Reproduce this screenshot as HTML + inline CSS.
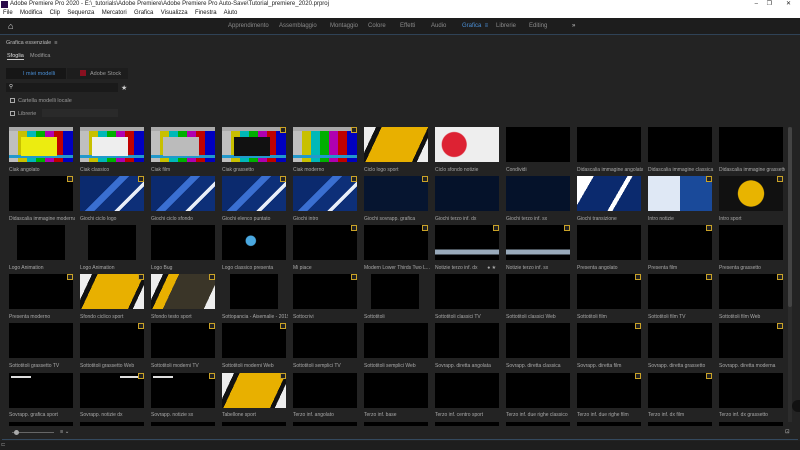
<!DOCTYPE html>
<html><head><meta charset="utf-8"><style>
*{margin:0;padding:0;box-sizing:border-box}
body{width:800px;height:450px;overflow:hidden;background:#232323;font-family:"Liberation Sans",sans-serif;position:relative}
.abs{position:absolute}
#title{left:0;top:0;width:800px;height:9px;background:#fff;font-size:6px;color:#222;line-height:9px;padding-left:10px}
#menu{left:0;top:9px;width:800px;height:9px;background:#fff;font-size:6px;color:#111;line-height:9px;padding-left:3px;word-spacing:2px}
#hdr{left:0;top:18px;width:800px;height:17px;background:#1d1d1d;border-bottom:1px solid #2f4256}
#hdr span{position:absolute;top:5px;font-size:6px;color:#8a8a8a}
#panel{left:2px;top:36px;width:796px;height:404px;background:#232323;border-bottom:1px solid #34495e}
.t{font-size:5.5px;color:#9a9a9a;position:absolute;white-space:nowrap}
.th{position:absolute;width:64px;height:35px;background:#000}
.lb{position:absolute;font-size:5px;color:#a9a9a9;white-space:nowrap;width:66px;overflow:hidden}
.bars{background:linear-gradient(180deg,#aaa 0 12%,transparent 12% 80%,#29c 80% 88%,transparent 88%),linear-gradient(90deg,#bfbfbf 0 14%,#c8c000 14% 28%,#00b8b8 28% 42%,#00b000 42% 56%,#b000b0 56% 70%,#c00000 70% 84%,#0000c0 84% 100%)}
.in{position:absolute;left:12px;top:10px;width:36px;height:19px}
.blue{background:linear-gradient(135deg,#0b2a6e 0 40%,#3a6fd1 40% 50%,#0d2f78 50% 70%,#e8eef8 70% 75%,#0d2f78 75%)}
.yel{background:linear-gradient(115deg,#eee 0 15%,#111 15% 22%,#e8b000 22% 80%,#111 80% 86%,#eee 86%)}
.ic{position:absolute;width:6px;height:6px;border:1px solid #c9a227;right:0;top:0;background:#222}
.wb{position:absolute;left:2px;top:3px;width:20px;height:2px;background:#ddd}
</style></head><body>
<div id="title" class="abs"><span style="position:absolute;left:1px;top:1px;width:7px;height:7px;background:#2a0a4a"></span>Adobe Premiere Pro 2020 - E:\_tutorials\Adobe Premiere\Adobe Premiere Pro Auto-Save\Tutorial_premiere_2020.prproj<span style="position:absolute;right:42px">–</span><span style="position:absolute;right:28px">❐</span><span style="position:absolute;right:9px">✕</span></div>
<div id="menu" class="abs">File&nbsp; Modifica&nbsp; Clip&nbsp; Sequenza&nbsp; Mercatori&nbsp; Grafica&nbsp; Visualizza&nbsp; Finestra&nbsp; Aiuto</div>
<div id="hdr" class="abs">
<span style="left:8px;top:3px;color:#ddd;font-size:9px">⌂</span>
<span style="left:228px">Apprendimento</span><span style="left:279px">Assemblaggio</span><span style="left:330px">Montaggio</span><span style="left:368px">Colore</span><span style="left:400px">Effetti</span><span style="left:431px">Audio</span><span style="left:462px;color:#4a8fd6">Grafica&nbsp;&nbsp;≡</span><span style="left:496px">Librerie</span><span style="left:529px">Editing</span><span style="left:572px;color:#ccc">»</span>
</div>
<div id="panel" class="abs"></div>
<div class="t" style="left:6px;top:40px;color:#bbb">Grafica essenziale &nbsp;≡</div>
<div class="t" style="left:7px;top:53px;color:#ddd;border-bottom:1px solid #ccc">Sfoglia</div>
<div class="t" style="left:30px;top:53px">Modifica</div>
<div class="abs" style="left:6px;top:68px;width:60px;height:11px;background:#161616"></div>
<div class="t" style="left:23px;top:71px;color:#4a8fd6">I miei modelli</div>
<div class="abs" style="left:67px;top:68px;width:61px;height:11px;background:#1d1d1d"></div>
<div class="abs" style="left:80px;top:70px;width:6px;height:6px;background:#8a1020"></div>
<div class="t" style="left:90px;top:71px">Adobe Stock</div>
<div class="abs" style="left:6px;top:83px;width:112px;height:9px;background:#1a1a1a"></div>
<div class="t" style="left:9px;top:84px;color:#ddd">⚲</div>
<div class="t" style="left:121px;top:84px;color:#ccc;font-size:7px">★</div>
<div class="abs" style="left:10px;top:98px;width:5px;height:5px;border:1px solid #aaa"></div>
<div class="t" style="left:18px;top:98px">Cartella modelli locale</div>
<div class="abs" style="left:10px;top:111px;width:5px;height:5px;border:1px solid #aaa"></div>
<div class="t" style="left:18px;top:111px">Librerie</div>
<div class="abs" style="left:42px;top:109px;width:76px;height:8px;background:#2a2a2a"></div>
<div class="abs" style="left:788px;top:127px;width:4px;height:295px;background:#2c2c2c"></div>
<div class="abs" style="left:788px;top:127px;width:4px;height:180px;background:#444;border-radius:2px"></div>
<div class="abs" style="left:792px;top:400px;width:8px;height:12px;background:#111;border-radius:6px 0 0 6px"></div>

<div id="g">
<div class="th bars" style="left:9px;top:127px"><div class="in" style="background:#ecec10"></div></div>
<div class="th bars" style="left:80px;top:127px"><div class="in" style="background:#eee"></div></div>
<div class="th bars" style="left:151px;top:127px"><div class="in" style="background:#bbb"></div></div>
<div class="th bars" style="left:222px;top:127px"><div class="in" style="background:#111"></div><div class="ic"></div></div>
<div class="th bars" style="left:293px;top:127px"><div class="ic"></div></div>
<div class="th yel" style="left:364px;top:127px"></div>
<div class="th" style="left:435px;top:127px;background:radial-gradient(circle at 30% 50%,#d23 0 25%,#eee 27% 100%)"></div>
<div class="th" style="left:506px;top:127px"></div>
<div class="th" style="left:577px;top:127px"></div>
<div class="th" style="left:648px;top:127px"></div>
<div class="th" style="left:719px;top:127px"></div>
<div class="th" style="left:9px;top:176px"><div class="ic"></div></div>
<div class="th blue" style="left:80px;top:176px"><div class="ic"></div></div>
<div class="th blue" style="left:151px;top:176px"></div>
<div class="th blue" style="left:222px;top:176px"><div class="ic"></div></div>
<div class="th blue" style="left:293px;top:176px"><div class="ic"></div></div>
<div class="th" style="left:364px;top:176px;background:#061530"><div class="ic"></div></div>
<div class="th" style="left:435px;top:176px;background:#05122a"></div>
<div class="th" style="left:506px;top:176px;background:#05122a"></div>
<div class="th" style="left:577px;top:176px;background:linear-gradient(120deg,#fff 0 20%,#0b2a6e 20% 60%,#fff 60% 66%,#0b2a6e 66%)"></div>
<div class="th" style="left:648px;top:176px;background:linear-gradient(90deg,#dfe8f5 0 50%,#1a4a9a 50%)"><div class="ic"></div></div>
<div class="th" style="left:719px;top:176px;background:radial-gradient(circle,#e8b400 0 35%,#111 37%)"><div class="ic"></div></div>
<div class="th" style="left:17px;top:225px;width:48px"></div>
<div class="th" style="left:88px;top:225px;width:48px"></div>
<div class="th" style="left:151px;top:225px"></div>
<div class="th" style="left:222px;top:225px;background:radial-gradient(circle at 45% 45%,#4aa8e0 0 12%,#000 14%)"></div>
<div class="th" style="left:293px;top:225px"><div class="ic"></div></div>
<div class="th" style="left:364px;top:225px"><div class="ic"></div></div>
<div class="th" style="left:435px;top:225px;background:linear-gradient(180deg,#000 0 70%,#9ab 70% 85%,#000 85%)"><div class="ic"></div></div>
<div class="th" style="left:506px;top:225px;background:linear-gradient(180deg,#000 0 70%,#9ab 70% 85%,#000 85%)"><div class="ic"></div></div>
<div class="th" style="left:577px;top:225px"></div>
<div class="th" style="left:648px;top:225px"><div class="ic"></div></div>
<div class="th" style="left:719px;top:225px"></div>
<div class="th" style="left:9px;top:274px"><div class="ic"></div></div>
<div class="th yel" style="left:80px;top:274px"><div class="ic"></div></div>
<div class="th yel" style="left:151px;top:274px;background:linear-gradient(115deg,#eee 0 15%,#111 15% 22%,#e8b000 22% 35%,#3a3528 35% 86%,#eee 86%)"><div class="ic"></div></div>
<div class="th" style="left:230px;top:274px;width:48px"></div>
<div class="th" style="left:293px;top:274px"><div class="ic"></div></div>
<div class="th" style="left:371px;top:274px;width:48px"></div>
<div class="th" style="left:435px;top:274px"></div>
<div class="th" style="left:506px;top:274px"></div>
<div class="th" style="left:577px;top:274px"><div class="ic"></div></div>
<div class="th" style="left:648px;top:274px"><div class="ic"></div></div>
<div class="th" style="left:719px;top:274px"><div class="ic"></div></div>
<div class="th" style="left:9px;top:323px"></div>
<div class="th" style="left:80px;top:323px"><div class="ic"></div></div>
<div class="th" style="left:151px;top:323px"><div class="ic"></div></div>
<div class="th" style="left:222px;top:323px"><div class="ic"></div></div>
<div class="th" style="left:293px;top:323px"></div>
<div class="th" style="left:364px;top:323px"></div>
<div class="th" style="left:435px;top:323px"></div>
<div class="th" style="left:506px;top:323px"></div>
<div class="th" style="left:577px;top:323px"><div class="ic"></div></div>
<div class="th" style="left:648px;top:323px"></div>
<div class="th" style="left:719px;top:323px"><div class="ic"></div></div>
<div class="th" style="left:9px;top:373px"><div class="wb"></div></div>
<div class="th" style="left:80px;top:373px"><div class="wb" style="left:40px"></div><div class="ic"></div></div>
<div class="th" style="left:151px;top:373px"><div class="wb"></div><div class="ic"></div></div>
<div class="th yel" style="left:222px;top:373px"><div class="ic"></div></div>
<div class="th" style="left:293px;top:373px"></div>
<div class="th" style="left:364px;top:373px"></div>
<div class="th" style="left:435px;top:373px"></div>
<div class="th" style="left:506px;top:373px"></div>
<div class="th" style="left:577px;top:373px"><div class="ic"></div></div>
<div class="th" style="left:648px;top:373px"><div class="ic"></div></div>
<div class="th" style="left:719px;top:373px"></div>
</div>
<div class="abs" style="left:9px;top:422px;width:776px;height:4px;background:repeating-linear-gradient(90deg,#000 0 64px,#232323 64px 71px)"></div>

<div class="lb" style="left:9px;top:167px">Ciak angolato</div><div class="lb" style="left:80px;top:167px">Ciak classico</div><div class="lb" style="left:151px;top:167px">Ciak film</div><div class="lb" style="left:222px;top:167px">Ciak grassetto</div><div class="lb" style="left:293px;top:167px">Ciak moderno</div><div class="lb" style="left:364px;top:167px">Ciclo logo sport</div><div class="lb" style="left:435px;top:167px">Ciclo sfondo notizie</div><div class="lb" style="left:506px;top:167px">Condividi</div><div class="lb" style="left:577px;top:167px">Didascalia immagine angolata</div><div class="lb" style="left:648px;top:167px">Didascalia immagine classica</div><div class="lb" style="left:719px;top:167px">Didascalia immagine grassetto</div>
<div class="lb" style="left:9px;top:216px">Didascalia immagine moderna</div><div class="lb" style="left:80px;top:216px">Giochi ciclo logo</div><div class="lb" style="left:151px;top:216px">Giochi ciclo sfondo</div><div class="lb" style="left:222px;top:216px">Giochi elenco puntato</div><div class="lb" style="left:293px;top:216px">Giochi intro</div><div class="lb" style="left:364px;top:216px">Giochi sovrapp. grafica</div><div class="lb" style="left:435px;top:216px">Giochi terzo inf. dx</div><div class="lb" style="left:506px;top:216px">Giochi terzo inf. sx</div><div class="lb" style="left:577px;top:216px">Giochi transizione</div><div class="lb" style="left:648px;top:216px">Intro notizie</div><div class="lb" style="left:719px;top:216px">Intro sport</div>
<div class="lb" style="left:9px;top:265px">Logo Animation</div><div class="lb" style="left:80px;top:265px">Logo Animation</div><div class="lb" style="left:151px;top:265px">Logo Bug</div><div class="lb" style="left:222px;top:265px">Logo classico presenta</div><div class="lb" style="left:293px;top:265px">Mi piace</div><div class="lb" style="left:364px;top:265px">Modern Lower Thirds Two L...</div><div class="lb" style="left:435px;top:265px">Notizie terzo inf. dx &nbsp; &nbsp; &nbsp; ● ★</div><div class="lb" style="left:506px;top:265px">Notizie terzo inf. sx</div><div class="lb" style="left:577px;top:265px">Presenta angolato</div><div class="lb" style="left:648px;top:265px">Presenta film</div><div class="lb" style="left:719px;top:265px">Presenta grassetto</div>
<div class="lb" style="left:9px;top:314px">Presenta moderno</div><div class="lb" style="left:80px;top:314px">Sfondo ciclico sport</div><div class="lb" style="left:151px;top:314px">Sfondo testo sport</div><div class="lb" style="left:222px;top:314px">Sottopancia - Aisemalie - 2019</div><div class="lb" style="left:293px;top:314px">Sottocrivi</div><div class="lb" style="left:364px;top:314px">Sottotitoli</div><div class="lb" style="left:435px;top:314px">Sottotitoli classici TV</div><div class="lb" style="left:506px;top:314px">Sottotitoli classici Web</div><div class="lb" style="left:577px;top:314px">Sottotitoli film</div><div class="lb" style="left:648px;top:314px">Sottotitoli film TV</div><div class="lb" style="left:719px;top:314px">Sottotitoli film Web</div>
<div class="lb" style="left:9px;top:363px">Sottotitoli grassetto TV</div><div class="lb" style="left:80px;top:363px">Sottotitoli grassetto Web</div><div class="lb" style="left:151px;top:363px">Sottotitoli moderni TV</div><div class="lb" style="left:222px;top:363px">Sottotitoli moderni Web</div><div class="lb" style="left:293px;top:363px">Sottotitoli semplici TV</div><div class="lb" style="left:364px;top:363px">Sottotitoli semplici Web</div><div class="lb" style="left:435px;top:363px">Sovrapp. diretta angolata</div><div class="lb" style="left:506px;top:363px">Sovrapp. diretta classica</div><div class="lb" style="left:577px;top:363px">Sovrapp. diretta film</div><div class="lb" style="left:648px;top:363px">Sovrapp. diretta grassetto</div><div class="lb" style="left:719px;top:363px">Sovrapp. diretta moderna</div>
<div class="lb" style="left:9px;top:412px">Sovrapp. grafica sport</div><div class="lb" style="left:80px;top:412px">Sovrapp. notizie dx</div><div class="lb" style="left:151px;top:412px">Sovrapp. notizie sx</div><div class="lb" style="left:222px;top:412px">Tabellone sport</div><div class="lb" style="left:293px;top:412px">Terzo inf. angolato</div><div class="lb" style="left:364px;top:412px">Terzo inf. base</div><div class="lb" style="left:435px;top:412px">Terzo inf. centro sport</div><div class="lb" style="left:506px;top:412px">Terzo inf. due righe classico</div><div class="lb" style="left:577px;top:412px">Terzo inf. due righe film</div><div class="lb" style="left:648px;top:412px">Terzo inf. dx film</div><div class="lb" style="left:719px;top:412px">Terzo inf. dx grassetto</div>

<div class="abs" style="left:12px;top:432px;width:42px;height:1px;background:#666"></div>
<div class="abs" style="left:14px;top:430px;width:5px;height:5px;border-radius:50%;background:#aaa"></div>
<div class="t" style="left:60px;top:429px;color:#bbb">≡ ⌄</div>
<div class="t" style="left:785px;top:429px;color:#bbb">⊡</div>
<div class="abs" style="left:0;top:441px;width:800px;height:9px;background:#1e1e1e"></div>
<div class="t" style="left:1px;top:442px;color:#888">⊏</div>
</body></html>
